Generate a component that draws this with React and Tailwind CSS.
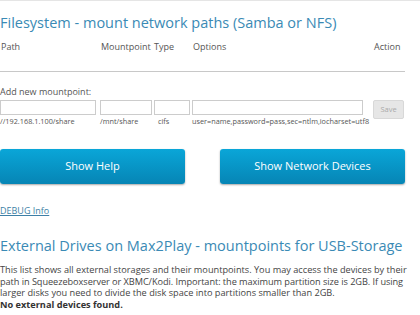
export default function App() {
  return (
    <div
      className="w-[420px] h-[315px] overflow-hidden bg-white border-t border-[#e5e5e5] text-[#555]"
      style={{ fontFamily: '"Open Sans", sans-serif' }}
    >
      <div className="w-[405px]">
        {/* Network mounts */}
        <h1 className="mt-[12px] text-[14.5px] leading-[20px] text-[#3a8ab5]">
          Filesystem - mount network paths (Samba or NFS)
        </h1>

        <div className="grid grid-cols-[100px_54px_38px_181px_32px] text-[9px] leading-[14px] mt-[7px] pb-[17px] border-b border-[#c8c8c8]">
          <span className="pl-px">Path</span>
          <span className="pl-px">Mountpoint</span>
          <span>Type</span>
          <span className="pl-px">Options</span>
          <span className="pl-px">Action</span>
        </div>

        <div className="mt-[13px] mb-px text-[9px] leading-[14px]">Add new mountpoint:</div>
        <div className="grid grid-cols-[100px_54px_38px_181px_32px] items-start">
          <div>
            <input className="block w-[96px] h-[15px] border border-[#ccc]" />
            <div className="text-[7.3px] leading-[12px]">//192.168.1.100/share</div>
          </div>
          <div>
            <input className="block w-[52px] h-[15px] border border-[#ccc]" />
            <div className="text-[7.3px] leading-[12px]">/mnt/share</div>
          </div>
          <div>
            <input className="block w-[36px] h-[15px] border border-[#ccc]" />
            <div className="text-[7.3px] leading-[12px] pl-[4px]">cifs</div>
          </div>
          <div>
            <input className="block w-[171px] h-[15px] border border-[#ccc]" />
            <div className="text-[7.3px] leading-[12px]">
              user=name,password=pass,sec=ntlm,iocharset=utf8
            </div>
          </div>
          <button className="w-[31px] h-[19px] bg-[#e6e6e6] border border-[#d8d8d8] rounded-[2px] text-[7.5px] text-[#aaa]">
            Save
          </button>
        </div>

        <div className="flex justify-between mt-[22px]">
          <button className="w-[185px] h-[35px] rounded-[3px] bg-gradient-to-b from-[#0aa6d8] to-[#0685b5] shadow-[0_1px_2px_rgba(0,0,0,0.35)] text-white text-[11px]">
            Show Help
          </button>
          <button className="w-[185px] h-[35px] rounded-[3px] bg-gradient-to-b from-[#0aa6d8] to-[#0685b5] shadow-[0_1px_2px_rgba(0,0,0,0.35)] text-white text-[11px]">
            Show Network Devices
          </button>
        </div>

        <a href="#" className="block mt-[21px] text-[9px] leading-[12px] text-[#3d7fa6] underline">
          DEBUG Info
        </a>

        {/* USB storage */}
        <h2 className="mt-[19px] text-[14.5px] leading-[20px] text-[#3a8ab5]">
          External Drives on Max2Play - mountpoints for USB-Storage
        </h2>
        <p className="mt-[8px] w-[412px] whitespace-nowrap text-[9.2px] leading-[11.5px] text-[#444]">
          This list shows all external storages and their mountpoints. You may access the devices by their
          <br />
          <span className="tracking-[-0.06px]">
            path in Squeezeboxserver or XBMC/Kodi. Important: the maximum partition size is 2GB. If using
          </span>
          <br />
          larger disks you need to divide the disk space into partitions smaller than 2GB.
          <br />
          <b className="text-[#333]">No external devices found.</b>
        </p>
      </div>
    </div>
  );
}
